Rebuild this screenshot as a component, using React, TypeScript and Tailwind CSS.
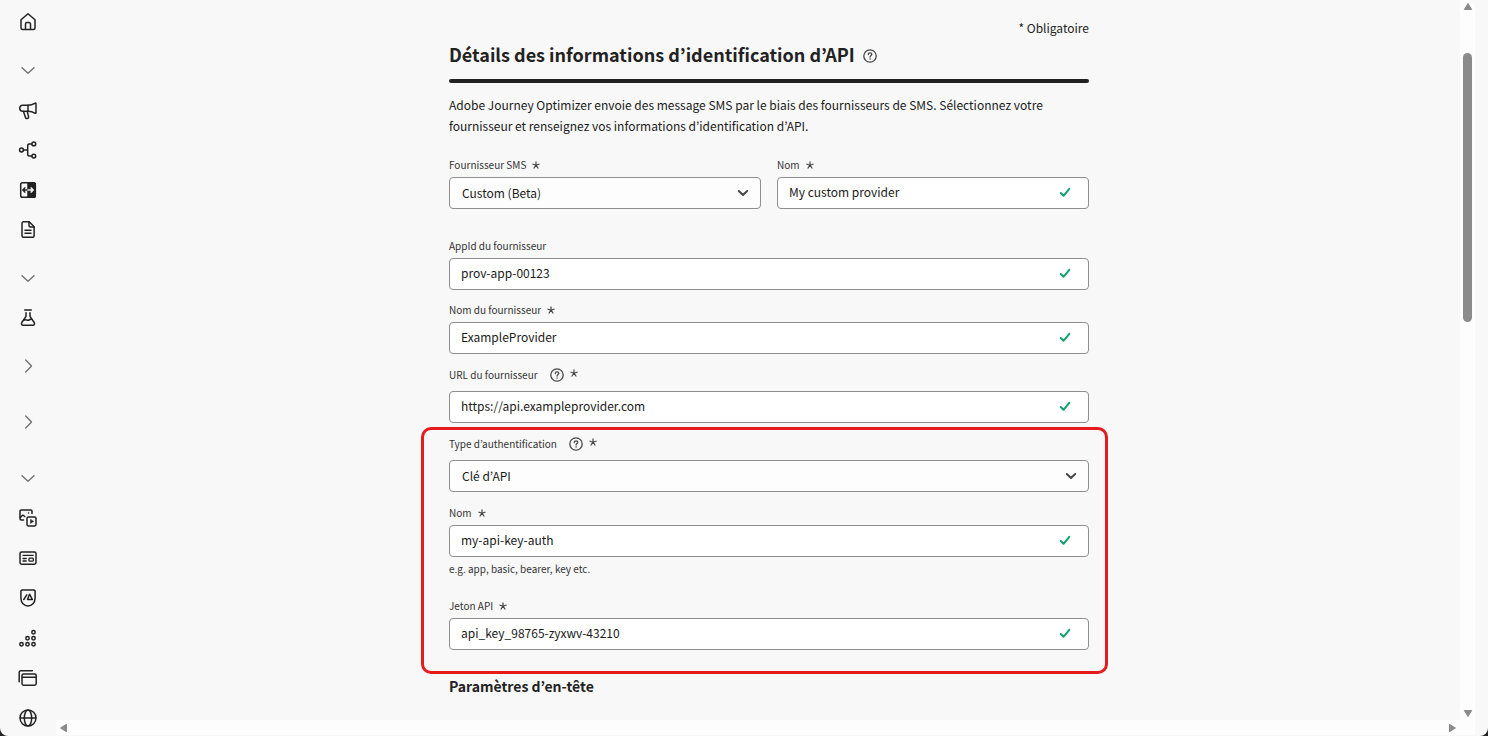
import React, { useId } from "react";

type Stroke = { children: React.ReactNode };

function Icon({ children }: Stroke) {
  return (
    <svg viewBox="0 0 20 20" className="size-5" fill="none" stroke="currentColor" strokeWidth={1.5} strokeLinecap="round" strokeLinejoin="round" aria-hidden="true">
      {children}
    </svg>
  );
}

const icons = {
  home: (
    <>
      <path d="M3 7.8 10 1.7l7 6.1v8.2a1.5 1.5 0 0 1-1.5 1.5h-11A1.5 1.5 0 0 1 3 16z" />
      <path d="M7.5 17.2V12A1.5 1.5 0 0 1 9 10.500h2A1.500 1.500 0 0 1 12.500 12v5.200" />
    </>
  ),
  megaphone: (
    <>
      <path d="M4.800 5.200H10c2.600 0 5-.8 7.300-2.100a.5.5 0 0 1 .7.450v9.300a.5.5 0 0 1-.7.450C15 12 12.600 11.300 10 11.300H4.800a3.050 3.050 0 0 1 0-6.100z" />
      <path d="M10 5.200v6M5.500 11.500l2 6a1.400 1.400 0 0 0 1.700 1l.5-.150a1.400 1.400 0 0 0 .9-1.700L9.200 11.500" />
    </>
  ),
  branch: (
    <>
      <circle cx="3.500" cy="10" r="1.900" />
      <circle cx="15.800" cy="3.900" r="1.900" />
      <circle cx="15.800" cy="16.100" r="1.900" />
      <path d="M5.500 10h4.200M13.800 3.900h-2.600a1.500 1.500 0 0 0-1.500 1.500v9.200a1.500 1.500 0 0 0 1.500 1.500h2.600" />
    </>
  ),
  split: (
    <>
      <rect x="2.700" y="2.700" width="14.600" height="14.600" rx="1.800" />
      <path d="M10 2.700h5.500a1.800 1.800 0 0 1 1.800 1.800v11a1.800 1.800 0 0 1-1.800 1.800H10z" fill="currentColor" />
      <path d="M10 10H5M6.800 7.900 4.800 10l2 2.100" />
      <path d="M10 10h5M13.200 7.900l2 2.100-2 2.100" stroke="#f8f8f8" />
    </>
  ),
  document: (
    <>
      <path d="M5.500 1.800h5.700l4.900 4.900v9a1.500 1.500 0 0 1-1.500 1.500H5.500A1.500 1.500 0 0 1 4 15.700V3.300a1.500 1.500 0 0 1 1.500-1.500z" />
      <path d="M11 2v3.500A1.500 1.500 0 0 0 12.500 7H16M7 10.300h6M7 13.300h6" />
    </>
  ),
  flask: (
    <>
      <path d="M6.700 2h6.600M8 4.700v3.600l-4.200 6.200a1.700 1.700 0 0 0 1.400 2.700h9.600a1.700 1.700 0 0 0 1.400-2.700L12 8.300V4.700" />
      <path d="M5.500 12.300c2.300-1.400 3.600.5 5.600-.3 1-.4 1.500-.9 2.300-1" />
    </>
  ),
  media: (
    <>
      <path d="M5.500 12.100H3.300A1.300 1.300 0 0 1 2 10.800V3.300A1.300 1.300 0 0 1 3.300 2h9.400A1.300 1.300 0 0 1 14 3.300v2.200" />
      <path d="M2.300 9.500 4 7.700a1.300 1.300 0 0 1 1.900 0l.9.800" />
      <circle cx="10.500" cy="5" r=".8" fill="currentColor" stroke="none" />
      <rect x="9" y="9" width="9" height="9" rx="1.400" />
      <path d="M12.500 11.600v3.800l3-1.900z" fill="currentColor" strokeWidth=".5" />
    </>
  ),
  card: (
    <>
      <rect x="2" y="4" width="16" height="12.200" rx="1.600" />
      <path d="M5 7.300h10.200M5 10.500h3.200M5 13h3.200" strokeWidth="1.300" />
      <rect x="11" y="10.200" width="4.300" height="3" rx=".8" strokeWidth="1.300" />
    </>
  ),
  shield: (
    <>
      <path d="M4.200 2h11.600a1.300 1.300 0 0 1 1.300 1.300v7c0 4.400-3.200 7.700-7.100 7.700s-7.100-3.300-7.100-7.700v-7A1.300 1.300 0 0 1 4.200 2z" />
      <path d="m5.800 11.500 3-4.700M9.500 11.500l2-5.300 2.900 5.300z" />
    </>
  ),
  dots: (
    <>
      <circle cx="15.500" cy="4.300" r="1.700" />
      <circle cx="9.500" cy="10.300" r="1.700" />
      <circle cx="15.500" cy="10.300" r="1.700" />
      <circle cx="3.500" cy="16.300" r="1.700" />
      <circle cx="9.500" cy="16.300" r="1.700" />
      <circle cx="15.500" cy="16.300" r="1.700" />
    </>
  ),
  windows: (
    <>
      <path d="M1.200 13.800V4.300a1.600 1.600 0 0 1 1.600-1.600h11.500" />
      <rect x="4" y="6" width="14.200" height="11.200" rx="1.600" />
      <path d="M4.200 9.300h13.800" />
    </>
  ),
  globe: (
    <>
      <circle cx="10" cy="10" r="8" />
      <ellipse cx="10" cy="10" rx="3.700" ry="8" />
      <path d="M2.200 10h15.600" />
    </>
  ),
  down: <path d="M4 7.700 10 13.200l6-5.500" strokeWidth="1.300" />,
  right: <path d="M7.700 4 13.500 10l-5.800 6" strokeWidth="1.300" />,
};

type NavItem = { icon: keyof typeof icons; label: string; space?: string; muted?: boolean };

const nav: NavItem[] = [
  { icon: "home", label: "Accueil" },
  { icon: "down", label: "Replier", space: "mt-2", muted: true },
  { icon: "megaphone", label: "Campagnes" },
  { icon: "branch", label: "Parcours" },
  { icon: "split", label: "Offres" },
  { icon: "document", label: "Pages" },
  { icon: "down", label: "Replier", space: "mt-2", muted: true },
  { icon: "flask", label: "Tests" },
  { icon: "right", label: "Déplier", space: "mt-2", muted: true },
  { icon: "right", label: "Déplier", space: "mt-4", muted: true },
  { icon: "down", label: "Replier", space: "mt-4", muted: true },
  { icon: "media", label: "Ressources" },
  { icon: "card", label: "Modèles" },
  { icon: "shield", label: "Marque" },
  { icon: "dots", label: "Fragments" },
  { icon: "windows", label: "Canaux" },
  { icon: "globe", label: "Traductions" },
];

function Sidebar() {
  return (
    <nav className="flex w-14 shrink-0 flex-col pt-0.5">
      {nav.map((item, i) => (
        <button
          key={i}
          type="button"
          aria-label={item.label}
          className={`flex h-10 shrink-0 items-center justify-center ${item.space ?? ""} ${item.muted ? "text-[#6e6e6e]" : "text-[#222222]"}`}
        >
          <Icon>{icons[item.icon]}</Icon>
        </button>
      ))}
    </nav>
  );
}

function Star() {
  return (
    <svg viewBox="0 0 8 8" className="size-2 shrink-0 text-[#464646]" stroke="currentColor" strokeWidth="1.200" aria-hidden="true">
      <path d="M4 4.200V.4M4 4.200.4 3M4 4.200 7.600 3M4 4.200 1.700 7.500M4 4.200l2.300 3.300" />
    </svg>
  );
}

function Help() {
  return (
    <button type="button" aria-label="Aide" className="shrink-0 text-[#464646]">
      <svg viewBox="0 0 14 14" className="size-3.5" fill="none" stroke="currentColor" strokeWidth="1.300" strokeLinecap="round">
        <circle cx="7" cy="7" r="6.200" />
        <path d="M5.300 5.500c0-1.100.8-1.700 1.800-1.700s1.700.6 1.700 1.500c0 1.200-1.700 1.300-1.700 2.700" />
        <circle cx="7.100" cy="10" r=".8" fill="currentColor" stroke="none" />
      </svg>
    </button>
  );
}

type FieldProps = {
  label: string;
  value: string;
  required?: boolean;
  help?: boolean;
  select?: boolean;
  hint?: string;
};

function Field({ label, value, required, help, select, hint }: FieldProps) {
  const id = useId();
  const control = "h-8 w-full rounded border border-[#8e8e8e] text-xs text-[#1a1a1a] outline-none";
  return (
    <div className="min-w-0 flex-1">
      <div className={`mb-1 flex items-center ${help ? "h-6" : "h-4"}`}>
        <label htmlFor={id} className="text-[10px] leading-4 text-[#333333]">
          {label}
        </label>
        {help && (
          <span className="ml-3 flex">
            <Help />
          </span>
        )}
        {required && (
          <span className={help ? "mb-1 ml-1.5" : "ml-1.5"}>
            <Star />
          </span>
        )}
      </div>
      <div className="relative">
        {select ? (
          <select id={id} defaultValue={value} className={`${control} appearance-none bg-[#fdfdfd] px-3`}>
            <option>{value}</option>
          </select>
        ) : (
          <input id={id} type="text" defaultValue={value} className={`${control} bg-white px-[11px] pb-1`} />
        )}
        {select ? (
          <svg viewBox="0 0 12 12" className="pointer-events-none absolute top-2.5 right-3 size-3 text-[#464646]" fill="none" stroke="currentColor" strokeWidth="2" strokeLinecap="round" strokeLinejoin="round" aria-hidden="true">
            <path d="M1.800 4 6 8l4.200-4" />
          </svg>
        ) : (
          <svg viewBox="0 0 12 12" className="pointer-events-none absolute top-2.5 right-[18px] size-3 text-[#12a06c]" fill="none" stroke="currentColor" strokeWidth="2" strokeLinecap="round" strokeLinejoin="round" aria-hidden="true">
            <path d="M1.800 6 4.500 8.800 10.300 1.800" />
          </svg>
        )}
      </div>
      {hint && <p className="mt-1 text-[10px] leading-4 text-[#333333]">{hint}</p>}
    </div>
  );
}

function Arrow({ d }: { d: string }) {
  return (
    <svg viewBox="0 0 10 10" className="size-2.5" fill="#8b8b8b" stroke="#8b8b8b" strokeLinejoin="round" aria-hidden="true">
      <path d={d} />
    </svg>
  );
}

export default function App() {
  return (
    <div className="h-screen bg-[#222222]">
      <div className="flex h-full overflow-hidden rounded-b-lg bg-[#f8f8f8] font-['Noto_Sans_CJK_KR','Noto_Sans',sans-serif] text-[#222222]">
        <Sidebar />
        <div className="mr-[13px] flex min-w-0 flex-1 flex-col">
          <div className="flex min-h-0 flex-1">
            <main className="min-w-0 flex-1 overflow-hidden pt-[18px] pl-[22px]">
              <form className="mx-auto max-w-[640px]">
                <p className="text-right text-xs leading-5">* Obligatoire</p>
                <div className="flex items-center gap-2">
                  <h1 className="text-lg leading-8 font-bold">Détails des informations d’identification d’API</h1>
                  <span className="flex pt-1">
                    <Help />
                  </span>
                </div>
                <div className="mt-[9px] h-1 rounded-full bg-[#222222]" />
                <p className="mt-[11px] text-xs leading-[21px] text-[#1a1a1a]">
                  Adobe Journey Optimizer envoie des message SMS par le biais des fournisseurs de SMS. Sélectionnez votre
                  fournisseur et renseignez vos informations d’identification d’API.
                </p>
                <div className="mt-[21px] flex gap-4">
                  <Field label="Fournisseur SMS" value="Custom (Beta)" required select />
                  <Field label="Nom" value="My custom provider" required />
                </div>
                <div className="mt-[29px] flex flex-col">
                  <Field label="AppId du fournisseur" value="prov-app-00123" />
                </div>
                <div className="mt-3 flex flex-col gap-[9px]">
                  <Field label="Nom du fournisseur" value="ExampleProvider" required />
                  <Field label="URL du fournisseur" value="https://api.exampleprovider.com" required help />
                </div>
                <section className="mt-1 -mr-[19px] -ml-7 rounded-[10px] border-3 border-[#e61c1c] pt-0.5 pr-4 pb-[21px] pl-[25px]">
                  <Field label="Type d’authentification" value="Clé d’API" required help select />
                  <div className="mt-[13px]">
                    <Field label="Nom" value="my-api-key-auth" required hint="e.g. app, basic, bearer, key etc." />
                  </div>
                  <div className="mt-[21px]">
                    <Field label="Jeton API" value="api_key_98765-zyxwv-43210" required />
                  </div>
                </section>
                <h2 className="text-sm leading-6 font-bold">Paramètres d’en-tête</h2>
              </form>
            </main>
            <div className="flex w-[15px] shrink-0 flex-col items-center rounded-tr-lg bg-[#fdfdfd] pt-0.5 pb-0.5">
              <Arrow d="M5 1.500 8.700 7.500H1.300z" />
              <div className="flex w-full flex-1 flex-col items-center pt-[41px]">
                <div className="h-[41%] w-[9px] rounded-full bg-[#8b8b8b]" />
              </div>
              <Arrow d="M5 8.500 1.300 2.500h7.400z" />
            </div>
          </div>
          <div className="mb-px flex h-[15px] shrink-0 items-center justify-between bg-[#fdfdfd] pr-[18px] pl-[3px]">
            <Arrow d="M1.500 5 7.500 1.300v7.400z" />
            <Arrow d="M8.500 5 2.500 1.300v7.400z" />
          </div>
        </div>
      </div>
    </div>
  );
}
